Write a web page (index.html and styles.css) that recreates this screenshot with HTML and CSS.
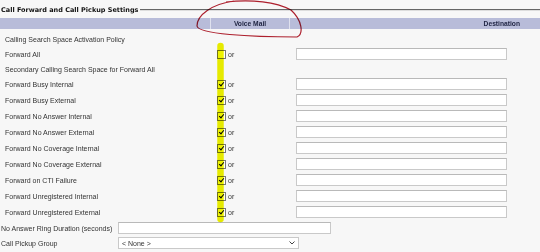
FILE: index.html
```html
<!DOCTYPE html>
<html lang="en">

<head>
    <meta charset="UTF-8">
    <title>Call Forward and Call Pickup Settings</title>
    <link rel="stylesheet" href="styles.css">
</head>

<body>
    <div class="page">
        <div class="legend"><span>Call Forward and Call Pickup Settings</span></div>

        <div class="head">
            <div class="col-label"></div>
            <div class="col-vm">Voice Mail</div>
            <div class="col-dest">Destination</div>
        </div>

        <div class="row short"><div class="col-label">Calling Search Space Activation Policy</div></div>
        <div class="row">
            <div class="col-label">Forward All</div>
            <div class="col-vm"><span class="cb"></span>or</div>
            <div class="col-dest"><span class="field"></span></div>
        </div>
        <div class="row short"><div class="col-label">Secondary Calling Search Space for Forward All</div></div>
        <div class="row">
            <div class="col-label">Forward Busy Internal</div>
            <div class="col-vm"><span class="cb on"></span>or</div>
            <div class="col-dest"><span class="field"></span></div>
        </div>
        <div class="row">
            <div class="col-label">Forward Busy External</div>
            <div class="col-vm"><span class="cb on"></span>or</div>
            <div class="col-dest"><span class="field"></span></div>
        </div>
        <div class="row">
            <div class="col-label">Forward No Answer Internal</div>
            <div class="col-vm"><span class="cb on"></span>or</div>
            <div class="col-dest"><span class="field"></span></div>
        </div>
        <div class="row">
            <div class="col-label">Forward No Answer External</div>
            <div class="col-vm"><span class="cb on"></span>or</div>
            <div class="col-dest"><span class="field"></span></div>
        </div>
        <div class="row">
            <div class="col-label">Forward No Coverage Internal</div>
            <div class="col-vm"><span class="cb on"></span>or</div>
            <div class="col-dest"><span class="field"></span></div>
        </div>
        <div class="row">
            <div class="col-label">Forward No Coverage External</div>
            <div class="col-vm"><span class="cb on"></span>or</div>
            <div class="col-dest"><span class="field"></span></div>
        </div>
        <div class="row">
            <div class="col-label">Forward on CTI Failure</div>
            <div class="col-vm"><span class="cb on"></span>or</div>
            <div class="col-dest"><span class="field"></span></div>
        </div>
        <div class="row">
            <div class="col-label">Forward Unregistered Internal</div>
            <div class="col-vm"><span class="cb on"></span>or</div>
            <div class="col-dest"><span class="field"></span></div>
        </div>
        <div class="row">
            <div class="col-label">Forward Unregistered External</div>
            <div class="col-vm"><span class="cb on"></span>or</div>
            <div class="col-dest"><span class="field"></span></div>
        </div>

        <div class="row">
            <div class="plain-label">No Answer Ring Duration (seconds)</div>
            <span class="field ring"></span>
        </div>
        <div class="row pick">
            <div class="plain-label">Call Pickup Group</div>
            <div class="select">
                <span>&lt; None &gt;</span>
                <svg width="6" height="4" viewBox="0 0 6 4"><path d="M0.5 0.5 L3 3 L5.5 0.5" fill="none" stroke="#444" stroke-width="1"/></svg>
            </div>
        </div>

        <!-- marks drawn over the screenshot -->
        <svg class="marks" width="540" height="252" viewBox="0 0 540 252">
            <path d="M220.5 46 L220.5 219" stroke="#eef200" stroke-width="6.5" stroke-linecap="round" fill="none"/>
            <path d="M234 1 C212 4 197 15 197 26 C198 34 250 37 297 37 C304 34 302 20 291 10 C276 2 252 -1 226 2" fill="none" stroke="#b3202e" stroke-width="1.2"/>
        </svg>
    </div>
</body>

</html>
```

FILE: styles.css
```css
body {
    margin: 0;
    background: #f7f7f7;
}

.page {
    position: relative;
    width: 540px;
    height: 252px;
    overflow: hidden;
    font-family: "Liberation Sans", Arial, sans-serif;
    font-size: 7px;
    color: #333;
}

.legend {
    display: flex;
    align-items: center;
    height: 16px;
    padding-top: 3px;
    box-sizing: border-box;
    font-family: "DejaVu Sans", Verdana, sans-serif;
    font-size: 6.5px;
}

.legend span {
    font-weight: bold;
    color: #111;
    padding: 0 2px 0 1px;
    white-space: nowrap;
}

.legend:after {
    content: "";
    flex: 1;
    border-top: 1px solid #666;
    border-bottom: 1px solid #ddd;
}

.head {
    display: flex;
    height: 11px;
    margin-top: 2px;
    background: #b8bcd9;
    font-weight: bold;
    font-size: 6.7px;
    color: #1d2240;
    line-height: 11px;
}

.head .col-vm {
    border-left: 1px solid #dfe1ee;
    border-right: 1px solid #dfe1ee;
    justify-content: center;
    padding: 0;
}

.head .col-dest {
    text-align: right;
    padding-right: 20px;
}

.row {
    display: flex;
    align-items: center;
    height: 16px;
}

.row.short {
    height: 14px;
}

.head + .row {
    margin-top: 3px;
}

.col-label {
    width: 210px;
    padding-left: 5px;
    box-sizing: border-box;
    white-space: nowrap;
}

.col-vm {
    width: 80px;
    display: flex;
    align-items: center;
    padding-left: 7px;
    box-sizing: border-box;
}

.col-dest {
    flex: 1;
    padding-left: 6px;
}

.cb {
    display: inline-block;
    width: 7px;
    height: 7px;
    border: 1px solid #777;
    background: #fff;
    margin-right: 2px;
    position: relative;
}

.cb.on:after {
    content: "";
    position: absolute;
    left: 2px;
    top: 0;
    width: 2px;
    height: 4px;
    border-right: 1.5px solid #000;
    border-bottom: 1.5px solid #000;
    transform: rotate(40deg);
}

.field {
    display: block;
    width: 211px;
    height: 12px;
    box-sizing: border-box;
    border: 1px solid #c9c9c9;
    border-top-color: #b9b9b9;
    background: #fff;
}

.plain-label {
    width: 118px;
    padding-left: 1px;
    box-sizing: border-box;
    white-space: nowrap;
}

.field.ring {
    width: 213px;
}

.row.pick {
    height: 14px;
}

.select {
    width: 181px;
    height: 12px;
    box-sizing: border-box;
    border: 1px solid #c9c9c9;
    background: #fff;
    display: flex;
    align-items: center;
    justify-content: space-between;
    padding: 0 3px;
}

.marks {
    position: absolute;
    left: 0;
    top: 0;
    pointer-events: none;
    mix-blend-mode: multiply;
}
```
